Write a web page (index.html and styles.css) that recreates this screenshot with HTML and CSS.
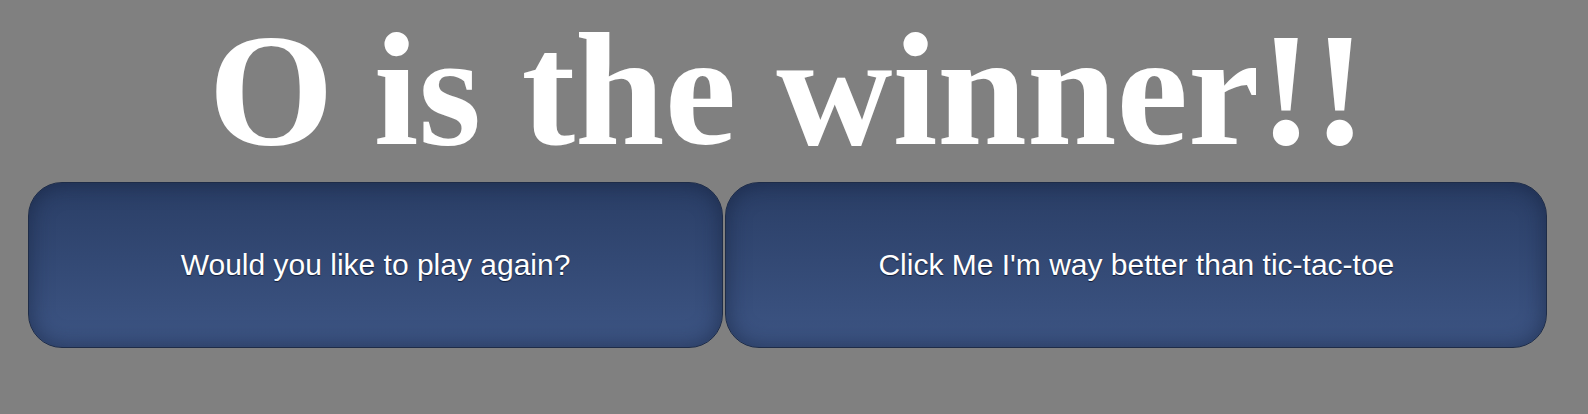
FILE: index.html
```html
<!DOCTYPE html>
<html lang="en">
<head>
<meta charset="utf-8">
<title>O is the winner!!</title>
<link rel="stylesheet" href="styles.css">
</head>
<body>
  <main class="page">
    <h1 class="winner">O is the winner!!</h1>
    <div class="actions">
      <button class="btn btn-again" type="button">Would you like to play again?</button>
      <button class="btn btn-better" type="button">Click Me I'm way better than tic-tac-toe</button>
    </div>
  </main>
</body>
</html>
```

FILE: styles.css
```css
html, body {
  margin: 0;
  padding: 0;
  background: #808080;
}

.page {
  padding-right: 13px;
  display: flex;
  flex-direction: column;
  align-items: center;
}

.winner {
  margin: 0 0 1px 0;
  font-family: "Liberation Serif", "Times New Roman", serif;
  font-weight: bold;
  font-size: 161px;
  line-height: 181px;
  color: #ffffff;
  text-align: center;
}

.actions {
  display: flex;
  gap: 2px;
  justify-content: center;
}

.btn {
  height: 166px;
  padding: 0 152px;
  border: 1px solid #1e2c48;
  border-radius: 34px;
  background: linear-gradient(to bottom, #2a3e66 0%, #3d5584 100%);
  box-shadow: inset 0 0 22px rgba(16, 28, 52, 0.55);
  color: #ffffff;
  font-family: "Liberation Sans", Arial, Helvetica, sans-serif;
  font-size: 30px;
  text-shadow: 0 1px 1px rgba(10, 18, 40, 0.8);
  cursor: pointer;
}
```
